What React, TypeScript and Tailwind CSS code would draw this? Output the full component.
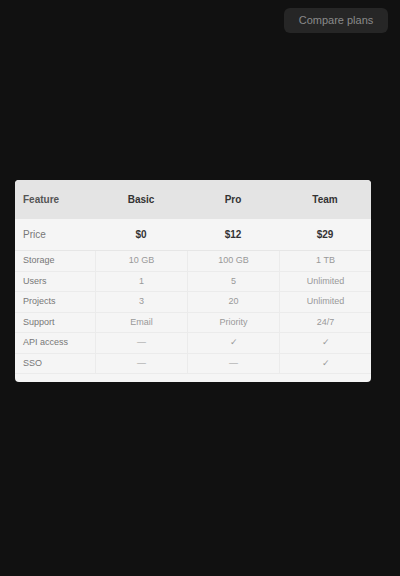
import React from 'react'

const ROWS = [
  { label: 'Storage', basic: '10 GB', pro: '100 GB', team: '1 TB' },
  { label: 'Users', basic: '1', pro: '5', team: 'Unlimited' },
  { label: 'Projects', basic: '3', pro: '20', team: 'Unlimited' },
  { label: 'Support', basic: 'Email', pro: 'Priority', team: '24/7' },
  { label: 'API access', basic: '—', pro: '✓', team: '✓' },
  { label: 'SSO', basic: '—', pro: '—', team: '✓' },
]

export default function App() {
  return (
    <div
      className="flex h-[576px] w-[400px] flex-col bg-[#111111] text-[#333]"
      style={{ fontFamily: '"Liberation Sans", Arial, sans-serif' }}
    >
      <div className="flex justify-end px-3 pt-2">
        <button className="h-[25px] w-[104px] rounded-md bg-[#262626] text-[11px] text-[#8a8a8a]">
          Compare plans
        </button>
      </div>

      <div className="ml-[15px] mt-[147px] w-[356px] overflow-hidden rounded-sm bg-[#f5f5f5]">
        <div className="grid grid-cols-[80px_1fr_1fr_1fr] items-center bg-[#e4e4e4] text-[10px] font-semibold">
          <div className="px-2 py-3 text-[#555]">Feature</div>
          <div className="px-2 py-3 text-center">Basic</div>
          <div className="px-2 py-3 text-center">Pro</div>
          <div className="px-2 py-3 text-center">Team</div>
        </div>
        <div className="grid grid-cols-[80px_1fr_1fr_1fr] items-center border-b border-[#e6e6e6] text-[10px]">
          <div className="px-2 py-2 text-[#777]">Price</div>
          <div className="px-2 py-2 text-center font-semibold">$0</div>
          <div className="px-2 py-2 text-center font-semibold">$12</div>
          <div className="px-2 py-2 text-center font-semibold">$29</div>
        </div>
        {ROWS.map((r) => (
          <div
            key={r.label}
            className="grid grid-cols-[80px_1fr_1fr_1fr] items-center border-b border-[#ebebeb] text-[9px] last:border-b-0"
          >
            <div className="px-2 py-[3px] text-[#777]">{r.label}</div>
            <div className="border-l border-[#ebebeb] px-2 py-[3px] text-center text-[#999]">{r.basic}</div>
            <div className="border-l border-[#ebebeb] px-2 py-[3px] text-center text-[#999]">{r.pro}</div>
            <div className="border-l border-[#ebebeb] px-2 py-[3px] text-center text-[#999]">{r.team}</div>
          </div>
        ))}
        <div className="h-[8px]" />
      </div>
    </div>
  )
}
